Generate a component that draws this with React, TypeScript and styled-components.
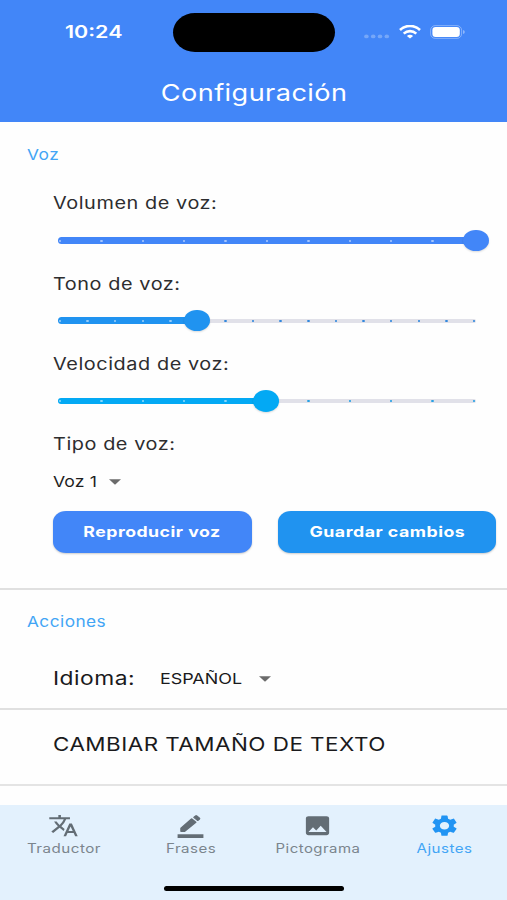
import React from "react";
import styled, { createGlobalStyle } from "styled-components";
import { MdTranslate, MdImage, MdSettings } from "react-icons/md";

const GlobalStyle = createGlobalStyle`
  *, *::before, *::after { box-sizing: border-box; }
  body { margin: 0; background: #fff; overflow: hidden; }
  button { border: 0; padding: 0; font: inherit; background: none; }
`;

const Screen = styled.div`
  width: 507px;
  height: 900px;
  display: flex;
  flex-direction: column;
  background: #fefefe;
  font-family: Inter, "Liberation Sans", sans-serif;
  overflow: hidden;
`;

const Header = styled.header`
  height: 122px;
  flex: none;
  background: #4286f8;
  color: #fff;
`;

const StatusBar = styled.div`
  height: 64px;
  display: grid;
  grid-template-columns: 173px 161.5px 1fr;
  align-items: center;
`;

const Island = styled.div`
  height: 39px;
  border-radius: 22px / 19.5px;
  background: #000;
`;

const Clock = styled.div`
  padding-left: 65px;
`;

const StatusIcons = styled.div`
  display: flex;
  align-items: center;
  padding-left: 28.5px;
`;

const TitleRow = styled.div`
  height: 60px;
  display: flex;
  justify-content: center;
  align-items: center;
  padding-left: 2px;
`;

const Text = styled.span<{
  $size: number;
  $stretch?: number;
  $track?: number;
  $weight?: number;
  $color?: string;
  $center?: boolean;
}>`
  display: inline-block;
  white-space: nowrap;
  font-size: ${(p) => p.$size}px;
  line-height: 1.2;
  font-weight: ${(p) => p.$weight ?? 400};
  letter-spacing: ${(p) => p.$track ?? 0.4}px;
  color: ${(p) => p.$color ?? "inherit"};
  transform: scaleX(${(p) => p.$stretch ?? 1.22});
  transform-origin: ${(p) => (p.$center ? "center" : "left")};
`;

const Content = styled.main`
  flex: 1;
  min-height: 0;
`;

const VoiceSection = styled.section`
  height: 468px;
  border-bottom: 2px solid #e0e0e0;
`;

const SectionTitle = styled.div<{ $top?: number }>`
  height: 61px;
  padding: ${(p) => p.$top ?? 21.5}px 0 0 27px;
  color: #42a5f5;
`;

const Setting = styled.div`
  height: 80.2px;
  padding-left: 52.5px;
`;

const SettingLabel = styled.div`
  height: 40px;
  display: flex;
  align-items: center;
  padding-top: 1px;
  color: #2d2d2f;
`;

const Rail = styled.div`
  position: relative;
  width: 414px;
  height: 35px;
  margin-left: 7.5px;
`;

const Track = styled.div`
  position: absolute;
  inset: 15.5px -2px auto -2px;
  height: 4px;
  border-radius: 2px;
  background: #e1e1e9;
`;

const ActiveTrack = styled.div<{ $ratio: number; $color: string }>`
  position: absolute;
  left: -2.5px;
  top: 14.2px;
  width: calc(${(p) => p.$ratio * 100}% + 3px);
  height: 6.6px;
  border-radius: 4px;
  background: ${(p) => p.$color};
`;

const Tick = styled.i<{ $at: number; $color: string }>`
  position: absolute;
  left: calc(${(p) => p.$at * 100}% - 1.3px);
  top: 16.5px;
  width: 2.6px;
  height: 2px;
  border-radius: 50%;
  background: ${(p) => p.$color};
`;

const Knob = styled.div<{ $ratio: number; $color: string }>`
  position: absolute;
  left: calc(${(p) => p.$ratio * 100}% - ${(p) => (p.$ratio === 1 ? 11.2 : 13.6)}px);
  top: 6.6px;
  width: 26px;
  height: 21.6px;
  border-radius: 50%;
  background: ${(p) => p.$color};
  box-shadow: 0 1px 2px rgba(0, 0, 0, 0.14);
`;

const VoiceType = styled.div`
  height: 36px;
  display: flex;
  align-items: center;
  color: #1f1f1f;
`;

const Arrow = styled.span`
  width: 12px;
  height: 5.6px;
  margin-top: 1px;
  background: #6b6b6b;
  clip-path: polygon(0 0, 100% 0, 50% 100%);
`;

const Box = styled.div<{ $w: number; $down?: number }>`
  width: ${(p) => p.$w}px;
  padding-top: ${(p) => p.$down ?? 0}px;
  flex: none;
`;

const Buttons = styled.div`
  display: flex;
  gap: 26px;
  padding: 7px 0 0 52.5px;
`;

const Action = styled.button<{ $w: number; $color: string }>`
  width: ${(p) => p.$w}px;
  height: 42px;
  flex: none;
  display: flex;
  align-items: center;
  justify-content: center;
  padding-top: 2px;
  border-radius: 13px / 11px;
  background: ${(p) => p.$color};
  color: #fff;
  box-shadow: 0 1px 2px rgba(0, 0, 0, 0.2);
`;

const ActionsSection = styled.section`
  border-bottom: 2px solid #e0e0e0;
  height: 120.4px;
`;

const LanguageRow = styled.div`
  height: 55px;
  display: flex;
  align-items: center;
  padding-left: 53px;
  color: #1a1a1c;
`;

const SizeRow = styled.section`
  height: 76px;
  display: flex;
  align-items: center;
  padding: 0 0 3.5px 52.5px;
  border-bottom: 2px solid #e4e4e4;
  color: #1a1a1c;
`;

const Nav = styled.nav`
  height: 95px;
  flex: none;
  background: #e3f1fd;
`;

const Tabs = styled.div`
  height: 80px;
  display: grid;
  grid-template-columns: repeat(4, 1fr);
`;

const Tab = styled.button<{ $active?: boolean }>`
  display: flex;
  flex-direction: column;
  align-items: center;
  padding: 8px 0 0 1px;
  color: ${(p) => (p.$active ? "#2194f3" : "#636d75")};
  svg {
    width: 31px;
    height: 25.4px;
    display: block;
  }
`;

const TabLabel = styled(Text)<{ $active?: boolean }>`
  margin: 2.7px 0 0 0.5px;
  color: ${(p) => (p.$active ? "#42a5f5" : "#7b858d")};
`;

const HomeIndicator = styled.div`
  width: 180px;
  height: 5.4px;
  margin: 1px auto 0;
  border-radius: 3px;
  background: #000;
`;

const SignalIcon = styled.svg`
  width: 27px;
  height: 20px;
`;

const WifiIcon = styled.svg`
  width: 22px;
  height: 14px;
  margin-left: 8.5px;
`;

const BatteryIcon = styled.svg`
  width: 36px;
  height: 14px;
  margin-left: 9px;
`;

function SignalDots() {
  return (
    <SignalIcon viewBox="0 0 27 20" fill="#fff" opacity=".27">
      {[3.4, 10.2, 17, 23.8].map((x) => (
        <ellipse key={x} cx={x} cy="14.4" rx="2.3" ry="1.9" />
      ))}
    </SignalIcon>
  );
}

function Wifi() {
  return (
    <WifiIcon viewBox="0 0 22 14" fill="none" stroke="#fff" strokeWidth="2.6">
      <path d="M1 5C6.600-.4 15.400-.4 21 5" />
      <path d="M4.700 8.600c3.600-3.300 9-3.300 12.600 0" />
      <path d="M11 13.600 7.900 10.900c1.800-1.500 4.400-1.500 6.200 0z" fill="#fff" stroke="none" />
    </WifiIcon>
  );
}

function Battery() {
  return (
    <BatteryIcon viewBox="0 0 36 14">
      <rect x=".6" y=".6" width="31" height="12.8" rx="4.6" fill="none" stroke="#fff" strokeOpacity=".35" />
      <rect x="2.4" y="2.1" width="27.4" height="9.8" rx="3.2" fill="#fff" />
      <path d="M33.2 5v4c2-.8 2-3.200 0-4z" fill="#fff" fillOpacity=".5" />
    </BatteryIcon>
  );
}

function UnderlinedPencil() {
  return (
    <svg viewBox="0 0 24 24" preserveAspectRatio="none" fill="currentColor">
      <path d="M2 20.100h20v3.900H2z" />
      <path
        d="M12.900 5.600l3.100 3.100L7.400 17.300H4.700v-2.900z"
        stroke="currentColor"
        strokeWidth="1.300"
        strokeLinejoin="round"
      />
      <path
        d="M17.600 7.200l-3.100-3.100 1.400-1.400c.3-.3.700-.3 1 0l2.100 2.100c.3.300.3.700 0 1z"
        stroke="currentColor"
        strokeWidth=".8"
        strokeLinejoin="round"
      />
    </svg>
  );
}

interface SliderProps {
  label: string;
  steps: number;
  value: number;
  color: string;
  tick: string;
}

function VoiceSlider({ label, steps, value, color, tick }: SliderProps) {
  const ratio = value / steps;
  return (
    <Setting>
      <SettingLabel>
        <Text $size={16.7} $stretch={1.19} $track={0.48}>{label}</Text>
      </SettingLabel>
      <Rail>
        <Track />
        <ActiveTrack $ratio={ratio} $color={color} />
        {Array.from({ length: steps + 1 }, (_, i) => (
          <Tick key={i} $at={i / steps} $color={i <= value ? "rgba(255,255,255,.55)" : tick} />
        ))}
        <Knob $ratio={ratio} $color={color} />
      </Rail>
    </Setting>
  );
}

export default function App() {
  return (
    <Screen>
      <GlobalStyle />
      <Header>
        <StatusBar>
          <Clock><Text $size={17.2} $weight={600} $track={0} $stretch={1.25}>10:24</Text></Clock>
          <Island />
          <StatusIcons><SignalDots /><Wifi /><Battery /></StatusIcons>
        </StatusBar>
        <TitleRow><Text $size={23} $stretch={1.18} $track={0.35} $center>Configuración</Text></TitleRow>
      </Header>
      <Content>
        <VoiceSection>
          <SectionTitle><Text $size={14.8} $stretch={1.17}>Voz</Text></SectionTitle>
          <VoiceSlider label="Volumen de voz:" steps={10} value={10} color="#4286f8" tick="#4286f8" />
          <VoiceSlider label="Tono de voz:" steps={15} value={5} color="#2093f0" tick="#2f86dd" />
          <VoiceSlider label="Velocidad de voz:" steps={10} value={5} color="#03a9f4" tick="#229fe4" />
          <Setting>
            <SettingLabel><Text $size={16.7} $stretch={1.19} $track={0.48}>Tipo de voz:</Text></SettingLabel>
            <VoiceType>
              <Box $w={56.5}><Text $size={14.8} $stretch={1.19} $track={0.1}>Voz 1</Text></Box>
              <Arrow />
            </VoiceType>
          </Setting>
          <Buttons>
            <Action $w={199.5} $color="#4286f8"><Text $size={14.7} $weight={700} $stretch={1.205} $center>Reproducir voz</Text></Action>
            <Action $w={218} $color="#2093f0"><Text $size={14.7} $weight={700} $stretch={1.21} $center>Guardar cambios</Text></Action>
          </Buttons>
        </VoiceSection>
        <ActionsSection>
          <SectionTitle $top={20.5}><Text $size={14.8} $stretch={1.165}>Acciones</Text></SectionTitle>
          <LanguageRow>
            <Box $w={107} $down={2}><Text $size={19} $stretch={1.2}>Idioma:</Text></Box>
            <Box $w={99}><Text $size={14.8} $track={0} $stretch={1.21}>ESPAÑOL</Text></Box>
            <Arrow />
          </LanguageRow>
        </ActionsSection>
        <SizeRow><Text $size={19} $stretch={1.18}>CAMBIAR TAMAÑO DE TEXTO</Text></SizeRow>
      </Content>
      <Nav>
        <Tabs>
          <Tab><MdTranslate preserveAspectRatio="none" /><TabLabel $size={12.7} $stretch={1.195} $center>Traductor</TabLabel></Tab>
          <Tab><UnderlinedPencil /><TabLabel $size={12.7} $stretch={1.19} $center>Frases</TabLabel></Tab>
          <Tab><MdImage preserveAspectRatio="none" /><TabLabel $size={12.7} $stretch={1.18} $center>Pictograma</TabLabel></Tab>
          <Tab $active><MdSettings preserveAspectRatio="none" /><TabLabel $size={12.7} $stretch={1.19} $center $active>Ajustes</TabLabel></Tab>
        </Tabs>
        <HomeIndicator />
      </Nav>
    </Screen>
  );
}
